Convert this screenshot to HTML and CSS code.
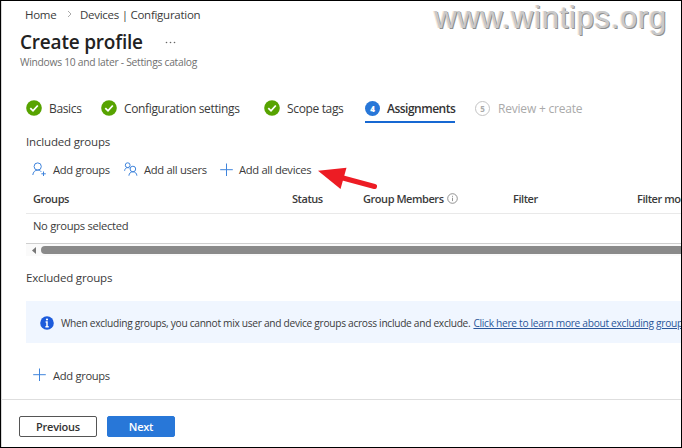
FILE: index.html
```html
<!DOCTYPE html>
<html lang="en">
<head>
    <meta charset="UTF-8">
    <meta name="viewport" content="width=device-width, initial-scale=1.0">
    <title>Create profile</title>
    <link rel="stylesheet" href="styles.css">
</head>
<body>
    <div class="page">
        <div class="watermark">www.wintips.org</div>

        <nav class="breadcrumb">
            <span class="crumb-home">Home</span>
            <svg class="chevron" width="5" height="8" viewBox="0 0 5 8"><path d="M1 1l3 3-3 3"/></svg>
            <span>Devices | Configuration</span>
        </nav>
        <header class="title-row">
            <h1>Create profile</h1>
            <svg class="more" width="11" height="3" viewBox="0 0 11 3"><circle cx="1.5" cy="1.5" r=".8"/><circle cx="5.5" cy="1.5" r=".8"/><circle cx="9.5" cy="1.5" r=".8"/></svg>
        </header>
        <p class="subtitle">Windows 10 and later - Settings catalog</p>

        <div class="steps">
            <div class="step">
                <svg class="done" width="16" height="16" viewBox="0 0 16 16"><circle cx="8" cy="8" r="7.8"/><path d="M4.3 8.2l2.7 2.6 4.8-5.3"/></svg>
                <span>Basics</span>
            </div>
            <div class="step">
                <svg class="done" width="16" height="16" viewBox="0 0 16 16"><circle cx="8" cy="8" r="7.8"/><path d="M4.3 8.2l2.7 2.6 4.8-5.3"/></svg>
                <span>Configuration settings</span>
            </div>
            <div class="step">
                <svg class="done" width="16" height="16" viewBox="0 0 16 16"><circle cx="8" cy="8" r="7.8"/><path d="M4.3 8.2l2.7 2.6 4.8-5.3"/></svg>
                <span>Scope tags</span>
            </div>
            <div class="step active">
                <b class="number">4</b>
                <span>Assignments</span>
            </div>
            <div class="step pending">
                <b class="number">5</b>
                <span>Review + create</span>
            </div>
        </div>

        <main class="content">
            <h2 class="included">Included groups</h2>
            <div class="toolbar">
                <div class="command">
                    <svg class="icon" width="15" height="15" viewBox="0 0 15 15"><circle cx="5.7" cy="4.5" r="3.6"/><path d="M.8 13c.3-3 2.2-4.9 4.9-4.9 1.5 0 2.7.6 3.5 1.6M11.5 9.5V14M9.3 11.8h4.5"/></svg>
                    <span>Add groups</span>
                </div>
                <div class="command">
                    <svg class="icon" width="15" height="15" viewBox="0 0 15 15"><circle cx="3.7" cy="3.2" r="2.4"/><path d="M.6 8.8c.2-2 1.4-3.2 3.1-3.2.7 0 1.2.2 1.7.5"/><circle cx="8.9" cy="7" r="2.8"/><path d="M4.9 13.7c.2-2.5 1.8-3.9 4-3.9s3.8 1.4 4 3.9"/></svg>
                    <span>Add all users</span>
                </div>
                <div class="command">
                    <svg class="icon" width="14" height="14" viewBox="0 0 14 14"><path d="M7 .5V13M.7 6.700h12.600"/></svg>
                    <span>Add all devices</span>
                </div>
                <svg class="pointer" width="60" height="24" viewBox="0 0 60 24"><path class="shaft" d="M25 11l31.500 8.500"/><path class="head" d="M0 3.700L28.500.7 22.500 22z"/></svg>
            </div>

            <div class="table">
                <div class="table-head">
                    <span>Groups</span>
                    <span>Status</span>
                    <span class="members">Group Members
                        <svg class="hint" width="11" height="11" viewBox="0 0 11 11"><circle cx="5.5" cy="5.5" r="4.8"/><path d="M5.5 4.700v3.400M5.500 2.800v1"/></svg>
                    </span>
                    <span>Filter</span>
                    <span>Filter mode</span>
                </div>
                <div class="table-row">No groups selected</div>
                <div class="scrollbar">
                    <svg width="4" height="7" viewBox="0 0 4 7"><path d="M4 0v7L0 3.5z"/></svg>
                    <div class="thumb"></div>
                </div>
            </div>

            <h2 class="excluded">Excluded groups</h2>
            <div class="banner">
                <svg class="info" width="14" height="14" viewBox="0 0 14 14"><circle cx="7" cy="7" r="6.8"/><path d="M5.600 6H7v4.500M5.400 10.700h3.300"/><circle class="dot" cx="7" cy="3.500" r="1.100"/></svg>
                <span>When excluding groups, you cannot mix user and device groups across include and exclude.</span>
                <a href="#">Click here to learn more about excluding groups.</a>
            </div>
            <div class="toolbar exclude-toolbar">
                <div class="command">
                    <svg class="icon" width="14" height="14" viewBox="0 0 14 14"><path d="M7 .5V13M.7 6.700h12.600"/></svg>
                    <span>Add groups</span>
                </div>
            </div>
        </main>

        <footer class="actions">
            <button class="previous">Previous</button>
            <button class="next">Next</button>
        </footer>
    </div>
</body>
</html>
```
FILE: styles.css
```css
* {
    box-sizing: border-box;
}

body {
    margin: 0;
    font-family: 'Open Sans', 'Noto Sans', sans-serif;
    font-size: 11.5px;
    letter-spacing: -0.27px;
    color: #3b3b3b;
    background: #fff;
}

.page {
    position: relative;
    width: 682px;
    height: 448px;
    border: 1px solid #000;
    overflow: hidden;
    white-space: nowrap;
    box-shadow: inset 1px 0 #d8d8d8;
}

svg {
    display: block;
    flex: none;
    fill: none;
}

.watermark {
    position: absolute;
    top: -2px;
    right: 14px;
    font: 31px/38px 'Liberation Sans', Arial, sans-serif;
    letter-spacing: 0.7px;
    color: #c9c9c9;
    text-shadow: 1px 1px #8f8f8f, -1px 0 #f5e6d6;
}

.breadcrumb {
    display: flex;
    align-items: center;
    height: 26px;
    padding-left: 24px;
}

.crumb-home {
    width: 42px;
}

.chevron {
    margin-right: 8px;
    stroke: #aaa;
}

.title-row {
    display: flex;
    align-items: center;
    height: 30px;
    padding-left: 19px;
}

h1 {
    width: 145px;
    margin: 0;
    font-size: 19px;
    font-weight: 600;
    letter-spacing: -0.2px;
    color: #222;
}

.more {
    fill: #666;
}

.subtitle {
    margin: 0;
    padding-left: 19px;
    height: 12px;
    line-height: 11px;
    font-size: 10.3px;
    letter-spacing: -0.28px;
    color: #707070;
}

.steps {
    display: grid;
    grid-template-columns: 75px 163px 101px 110px auto;
    justify-items: start;
    margin-top: 24px;
    padding-left: 25px;
}

.step {
    display: flex;
    align-items: center;
    gap: 7px;
    height: 30px;
    font-size: 12px;
    letter-spacing: -0.35px;
}

.done circle {
    fill: #57a300;
}

.done path {
    stroke: #fff;
    stroke-width: 1.8;
}

.number {
    flex: none;
    width: 15px;
    height: 15px;
    border-radius: 50%;
    font-size: 8px;
    line-height: 15px;
    text-align: center;
    letter-spacing: 0;
}

.active {
    width: 90px;
    font-weight: 600;
    letter-spacing: -0.5px;
    color: #333;
    background: linear-gradient(#1768d2, #1768d2) bottom / 100% 2px no-repeat;
}

.active .number {
    color: #fff;
    background: #2877d8;
}

.pending {
    gap: 8px;
    letter-spacing: -0.2px;
    color: #aaa;
}

.pending .number {
    border: 1px solid #c4c4c4;
    line-height: 13px;
}

.content {
    padding-left: 25px;
}

h2 {
    margin: 0;
    height: 20px;
    font-size: 11.5px;
    font-weight: 400;
    letter-spacing: -0.17px;
    line-height: 20px;
}

.included {
    margin-top: 9px;
}

.excluded {
    margin-top: 12px;
}

.toolbar {
    position: relative;
    display: grid;
    grid-template-columns: 92px 95px auto;
    align-items: center;
    height: 35px;
    padding-left: 6px;
}

.command {
    display: flex;
    align-items: center;
    font-size: 11.2px;
    letter-spacing: -0.32px;
}

.icon {
    width: 15px;
    margin-right: 6px;
    stroke: #3f84dc;
}

.command + .command .icon {
    margin-right: 5px;
}

.exclude-toolbar {
    height: 30px;
    margin-top: 17px;
}

.pointer {
    position: absolute;
    left: 292px;
    top: 15px;
}

.pointer .shaft {
    stroke: #ed1c24;
    stroke-width: 5;
    stroke-linecap: round;
}

.pointer .head {
    fill: #ed1c24;
}

.table-head {
    display: grid;
    grid-template-columns: 259px 71px 150px 124px auto;
    align-items: center;
    height: 27px;
    padding: 0 0 4px 7px;
    border-bottom: 1px solid #e9e9e9;
    font-size: 11px;
    font-weight: 600;
    letter-spacing: -0.45px;
}

.members {
    display: flex;
    align-items: center;
    gap: 3px;
}

.hint {
    stroke: #777;
    stroke-width: 0.8;
}

.table-row {
    display: flex;
    align-items: center;
    height: 30px;
    padding: 0 0 7px 7px;
    border-bottom: 1px solid #cfcfcf;
    font-size: 11.2px;
    letter-spacing: -0.3px;
}

.scrollbar {
    display: flex;
    align-items: center;
    gap: 5px;
    height: 12px;
    padding-left: 6px;
    background: #fafafa;
}

.scrollbar svg {
    fill: #777;
}

.thumb {
    flex: 1;
    height: 8px;
    border-radius: 4px 0 0 4px;
    background: #8a8a8a;
}

.banner {
    display: flex;
    align-items: center;
    height: 42px;
    margin-top: 13px;
    padding: 1px 0 0 14px;
    font-size: 10.2px;
    letter-spacing: -0.3px;
    background: #f0f6ff;
}

.info {
    margin-right: 7px;
}

.info circle {
    fill: #1d5bdb;
}

.info path {
    stroke: #fff;
    stroke-width: 1.5;
}

.info .dot {
    fill: #fff;
}

.banner a {
    margin-left: 3px;
    color: #2b579a;
}

.actions {
    display: flex;
    gap: 10px;
    margin-top: 9px;
    padding: 16px 0 0 18px;
    border-top: 1px solid #dedede;
}

.actions button {
    height: 21px;
    padding: 0;
    border: 1px solid #555;
    border-radius: 2px;
    font: 600 11px/18px 'Open Sans', sans-serif;
    letter-spacing: -0.25px;
    color: #333;
    background: #fff;
}

.actions .previous {
    width: 78px;
}

.actions .next {
    width: 68px;
    border-color: #2877d8;
    color: #fff;
    background: #2877d8;
}
```
